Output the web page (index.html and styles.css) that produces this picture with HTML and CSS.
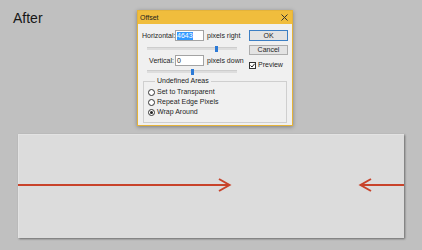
FILE: index.html
```html
<!DOCTYPE html>
<html lang="en">
<head>
    <meta charset="UTF-8">
    <meta name="viewport" content="width=device-width, initial-scale=1.0">
    <title>Offset - After</title>
    <link rel="stylesheet" href="styles.css">
</head>
<body>
    <div class="page">
        <h1 class="heading">After</h1>

        <div class="canvas">
            <svg class="arrows" width="386" height="104" viewBox="0 0 386 104">
                <line x1="0" y1="51" x2="211" y2="51"/>
                <polyline points="201,45 211.5,51 201,57"/>
                <line x1="342" y1="51" x2="386" y2="51"/>
                <polyline points="353,45 342.5,51 353,57"/>
            </svg>
        </div>

        <div class="dialog">
            <div class="dlg-title">
                <span>Offset</span>
                <svg class="close" width="7" height="7" viewBox="0 0 7 7">
                    <path d="M0.5 0.5 L6.5 6.5 M6.5 0.5 L0.5 6.5"/>
                </svg>
            </div>
            <div class="dlg-body">
                <div class="fields">
                    <div class="row">
                        <label>Horizontal:</label>
                        <span class="input"><span class="sel">4643</span></span>
                        <span>pixels right</span>
                    </div>
                    <div class="slider">
                        <div class="track"><span class="thumb" style="margin-left: 68px;"></span></div>
                    </div>
                    <div class="row">
                        <label>Vertical:</label>
                        <span class="input">0</span>
                        <span>pixels down</span>
                    </div>
                    <div class="slider short">
                        <div class="track"><span class="thumb" style="margin-left: 44px;"></span></div>
                    </div>
                </div>

                <div class="buttons">
                    <div class="btn default">OK</div>
                    <div class="btn cancel">Cancel</div>
                    <div class="preview">
                        <span class="check">
                            <svg width="5" height="5" viewBox="0 0 5 5"><path d="M0.5 2.5 L2 4 L4.6 0.8"/></svg>
                        </span>
                        <span>Preview</span>
                    </div>
                </div>

                <fieldset class="group">
                    <legend>Undefined Areas</legend>
                    <div class="opt"><span class="radio"></span>Set to Transparent</div>
                    <div class="opt"><span class="radio"></span>Repeat Edge Pixels</div>
                    <div class="opt"><span class="radio on"></span>Wrap Around</div>
                </fieldset>
            </div>
        </div>
    </div>
</body>
</html>
```

FILE: styles.css
```css
body {
    margin: 0;
    background-color: #c0c0c0;
    font-family: "Liberation Sans", Arial, sans-serif;
}

.page {
    position: relative;
    width: 422px;
    height: 250px;
    padding-top: 10px;
    box-sizing: border-box;
}

.heading {
    margin: 0 0 0 13px;
    font-size: 14px;
    line-height: 16px;
    font-weight: normal;
    color: #161616;
}

.canvas {
    margin: 108px 0 0 18px;
    width: 386px;
    height: 104px;
    background: #dcdcdc;
    box-shadow: inset 1px 1px 0 #e3e3e3, 1px 1px 2px rgba(0, 0, 0, 0.45);
}

.arrows {
    display: block;
}

.arrows line,
.arrows polyline {
    stroke: #c8432b;
    stroke-width: 2;
    fill: none;
}

/* dialog window */
.dialog {
    position: absolute;
    left: 137px;
    top: 10px;
    width: 156px;
    height: 116px;
    box-sizing: border-box;
    border: 1px solid #e4b33a;
    background: #f0f0f0;
    box-shadow: 0 1px 4px rgba(0, 0, 0, 0.35);
    font-size: 7px;
    line-height: 8px;
    color: #1e1e1e;
    display: flex;
    flex-direction: column;
}

.dlg-title {
    height: 13px;
    flex: none;
    background: #f0bd3d;
    display: flex;
    align-items: center;
    justify-content: space-between;
    padding: 0 4px 0 2px;
    color: #222;
}

.close path {
    stroke: #333;
    stroke-width: 1;
}

.dlg-body {
    flex: 1;
    display: grid;
    grid-template-columns: 103px 39px;
    column-gap: 4px;
    align-content: start;
    padding: 6px 4px 2px 4px;
}

.row {
    display: flex;
    align-items: center;
    height: 11px;
}

.row label {
    width: 32px;
    margin-right: 1px;
    text-align: right;
}

.input {
    width: 29px;
    height: 11px;
    box-sizing: border-box;
    border: 1px solid #a3a3a3;
    background: #fff;
    display: flex;
    align-items: center;
    padding: 0 1px;
    margin-right: 3px;
}

.sel {
    background: #3399ff;
    color: #fff;
    line-height: 8px;
}

.slider {
    height: 14px;
    display: flex;
    align-items: center;
    margin-left: 5px;
}

.slider.short {
    height: 11px;
}

.track {
    width: 90px;
    height: 2px;
    background: #dddddd;
    border-top: 1px solid #cdcdcd;
    display: flex;
    align-items: center;
}

.thumb {
    width: 3px;
    height: 6px;
    background: #2c7ad6;
    flex: none;
}

.buttons {
    display: flex;
    flex-direction: column;
}

.btn {
    height: 11px;
    box-sizing: border-box;
    border: 1px solid #adadad;
    background: #e3e3e3;
    display: flex;
    align-items: center;
    justify-content: center;
}

.btn.default {
    border-color: #3c7fc4;
}

.btn.cancel {
    margin-top: 4px;
    height: 10px;
}

.preview {
    margin-top: 6px;
    display: flex;
    align-items: center;
    gap: 2px;
}

.check {
    width: 7px;
    height: 7px;
    box-sizing: border-box;
    border: 1px solid #333;
    background: #fff;
    display: flex;
}

.check path {
    stroke: #222;
    stroke-width: 1;
    fill: none;
}

.group {
    grid-column: 1 / -1;
    margin: 0 1px;
    padding: 2px 0 5px 4px;
    border: 1px solid #cfcfcf;
}

.group legend {
    margin-left: 7px;
    padding: 0 2px;
    line-height: 8px;
}

.opt {
    display: flex;
    align-items: center;
    gap: 2px;
    height: 10px;
}

.radio {
    width: 7px;
    height: 7px;
    box-sizing: border-box;
    border: 1px solid #333;
    border-radius: 50%;
    background: #fff;
    display: flex;
    align-items: center;
    justify-content: center;
}

.radio.on::after {
    content: "";
    width: 3px;
    height: 3px;
    border-radius: 50%;
    background: #222;
}
```
